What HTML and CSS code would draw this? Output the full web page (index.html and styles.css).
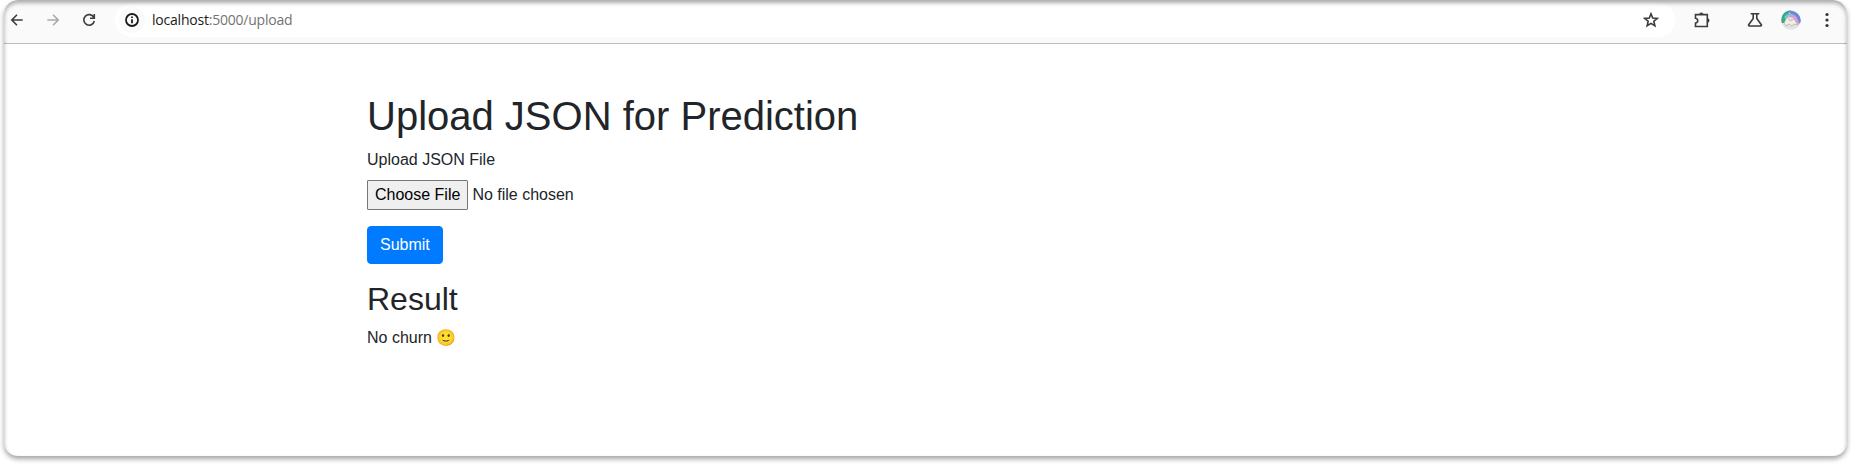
FILE: index.html
```html
<!DOCTYPE html>
<html lang="en">
<head>
<meta charset="utf-8">
<title>Upload JSON for Prediction</title>
<link rel="stylesheet" href="styles.css">
</head>
<body>
<div class="window">
  <header class="toolbar">
    <nav class="nav">
      <svg class="icon" viewBox="0 0 16 16"><path d="M13.7 8H3M8 2.8 2.8 8 8 13.2"/></svg>
      <svg class="icon icon-disabled" viewBox="0 0 16 16"><path d="M2.3 8H13M8 2.8 13.2 8 8 13.2"/></svg>
      <svg class="icon" viewBox="0 0 16 16"><path d="M12.8 5.4A5.3 5.3 0 1 0 13.3 9M13.3 2v4.2H9"/></svg>
    </nav>
    <div class="address">
      <span class="site-info"><svg class="icon icon-info" viewBox="0 0 16 16"><circle cx="8" cy="8" r="6"/><path d="M8 7.2v4M8 4.4v1.7"/></svg></span>
      <span class="url"><span class="host">localhost</span>:5000/upload</span>
      <svg class="icon star" viewBox="0 0 16 16"><path d="m8 1.8 1.7 4.2 4.6.4-3.5 2.9 1.1 4.5L8 11.4l-3.9 2.4 1.1-4.5-3.5-2.9L6.3 6z"/></svg>
    </div>
    <div class="actions">
      <svg class="icon puzzle" viewBox="0 0 18 18"><path d="M2.5 3.6h11.8v11.9H2.5v-3.4c3-.6 3-4.2 0-4.8z"/><path class="solid" d="M6.2 3.6a2.1 2.1 0 0 1 4.2 0zM14.3 7.2a2.2 2.2 0 0 1 0 4.4z"/></svg>
      <svg class="icon flask" viewBox="0 0 16 16"><path d="M3.7 1.8h8.6M6.2 2v4.5L1.7 12.7q-.6 1.2.8 1.3h11q1.4-.1.8-1.3L9.8 6.5V2"/></svg>
      <svg class="avatar" viewBox="0 0 20 20">
        <clipPath id="face"><circle cx="10" cy="10" r="9.8"/></clipPath>
        <g clip-path="url(#face)">
          <rect width="20" height="20" fill="#e3e3e3"/>
          <path d="M0 13V0h10l-5 8-1 5z" fill="#36a98c"/>
          <path d="M4 8Q8 3 13 6t4 8" fill="none" stroke="#70c9dc" stroke-width="2.5"/>
          <path d="M9 2q9 1 10 11" fill="none" stroke="#6d87d8" stroke-width="3.2"/>
          <path d="M8 6q7-1 9 8" fill="none" stroke="#d89bd7" stroke-width="2.6"/>
          <path d="m3 13 3-6 3 4 4-2 4 6-4-1-2 2-3-2-3 2z" fill="#f3eee5" stroke="#aaa095" stroke-width=".6"/>
        </g>
      </svg>
      <svg class="dots" viewBox="0 0 16 16"><circle cx="8" cy="2.5" r="1.6"/><circle cx="8" cy="8" r="1.6"/><circle cx="8" cy="13.5" r="1.6"/></svg>
    </div>
  </header>
  <main class="container">
    <h1>Upload JSON for Prediction</h1>
    <form>
      <label for="file">Upload JSON File</label>
      <input class="file" type="file" id="file">
      <button class="submit" type="button">Submit</button>
    </form>
    <h2>Result</h2>
    <p>No churn 🙂</p>
  </main>
</div>
</body>
</html>
```
FILE: styles.css
```css
* { box-sizing: border-box; }
body {
  margin: 0;
  height: 464px;
  padding: 0 4px 8px;
  overflow: hidden;
  background: #fff;
  color: #212529;
  font: 16px/24px "Liberation Sans", Arial, sans-serif;
}
.window {
  position: relative;
  height: 456px;
  border-radius: 14px;
  background: #fff;
  box-shadow: 0 3px 5px rgba(0, 0, 0, .36);
  overflow: hidden;
}
/* shaded rim along the top edge */
.window::after {
  content: "";
  position: absolute;
  inset: 0;
  border-radius: 14px;
  box-shadow: inset 0 3px 4px rgba(0, 0, 0, .32);
  pointer-events: none;
}
.toolbar {
  display: flex;
  height: 44px;
  padding: 3px 11px 6px 5px;
  background: #fafafa;
  border-bottom: 1px solid #bdbdbd;
}
.nav { display: flex; align-items: center; gap: 20px; width: 106px; }
.icon {
  width: 16px;
  height: 16px;
  flex: none;
  fill: none;
  stroke: #3c3c3c;
  stroke-width: 1.6;
}
.icon-disabled { stroke: #aaa; }
.address {
  display: flex;
  align-items: center;
  width: 1560px;
  padding: 0 16px 0 4px;
  border-radius: 17px;
  background: #fff;
}
.site-info {
  display: grid;
  place-items: center;
  width: 26px;
  height: 26px;
  border-radius: 50%;
  background: #fafafa;
}
.icon-info { stroke: #1c1c1c; stroke-width: 1.8; }
.url {
  margin-left: 7px;
  color: #737373;
  font: 14px/20px "Open Sans", "Noto Sans", sans-serif;
  letter-spacing: -.22px;
}
.host { color: #202020; }
.star { margin-left: auto; }
.actions { display: flex; align-items: center; flex: 1; }
.puzzle { width: 18px; height: 18px; margin-left: 18px; }
.solid { fill: #3c3c3c; stroke: none; }
.flask { margin-left: 36px; }
.avatar { width: 20px; height: 20px; margin-left: 18px; }
.dots { width: 16px; height: 16px; margin-left: 18px; fill: #333; }
.container { padding: 48px 363px 0; }
h1, h2 { margin: 0 0 8px; font-weight: 500; line-height: 1.2; }
h1 { font-size: 40px; }
h2 { margin-top: 16px; font-size: 32px; }
label { display: block; margin-bottom: 8px; }
.file { display: block; width: 300px; height: 30px; margin-bottom: 16px; font: inherit; line-height: 24px; }
.file::file-selector-button {
  height: 30px;
  padding: 1px 7px;
  border: 1px solid #767676;
  border-radius: 1px;
  background: #efefef;
  color: #000;
  font: inherit;
}
.submit {
  display: block;
  height: 38px;
  padding: 6px 12px;
  border: 1px solid #007bff;
  border-radius: 4px;
  background: #007bff;
  color: #fff;
  font: inherit;
}
p { margin: 0; }
```
